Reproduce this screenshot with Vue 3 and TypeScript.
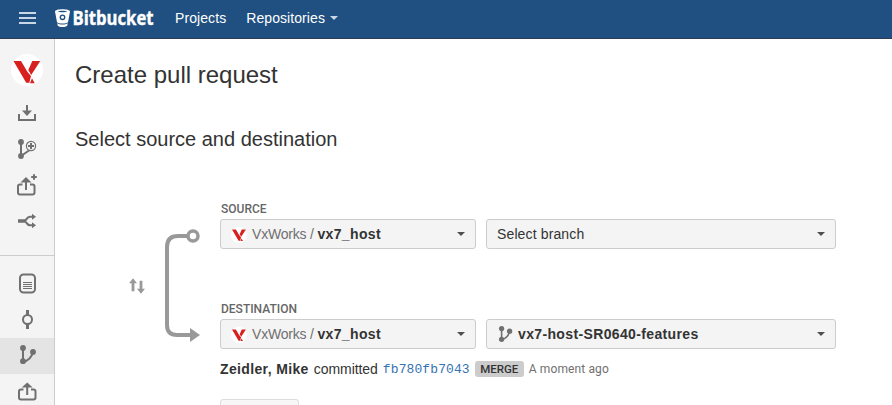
<script setup lang="ts">
interface NavItem {
  name: string
  active?: boolean
}

const actions: NavItem[] = [
  { name: 'clone' },
  { name: 'branch-add' },
  { name: 'pull-add' },
  { name: 'fork' },
]
const sections: NavItem[] = [
  { name: 'source' },
  { name: 'commits' },
  { name: 'branches', active: true },
  { name: 'pulls' },
]
const groups = [actions, sections]
const logoPath = 'M2.500 7H10L16.500 18 20 22 18.300 28.700H15.200ZM21.300 7H29.300L20.200 21 17.300 16ZM21 24.300 23.700 29.300H19Z'
</script>

<template>
  <div class="page">
    <header class="header">
      <svg class="menu" width="17" height="14" viewBox="0 0 17 14"><path d="M0 1h17M0 6h17M0 11h17" /></svg>
      <svg class="brand" width="102" height="28" viewBox="0 -3 102 28">
        <path class="white" fill-rule="evenodd" d="M0 3.600C0 .4 15 .4 15 3.600L13 14.200C11.500 16 3.500 16 2 14.200ZM2.600 3.500C4.500 4.500 10.500 4.500 12.400 3.500C10.500 2.500 4.500 2.500 2.600 3.500ZM7.500 6.400A2.900 2.900 0 1 0 7.500 12.200A2.900 2.900 0 1 0 7.500 6.400Z" />
        <circle class="white" cx="7.500" cy="9.300" r="1.500" />
        <path class="white" d="M2.200 15.300C4.500 17 10.500 17 12.800 15.300L12.200 17.700C10.500 19.400 4.500 19.400 2.800 17.700Z" />
        <text x="17.500" y="17.300" textLength="81" lengthAdjust="spacingAndGlyphs">Bitbucket</text>
      </svg>
      <nav class="links">
        <a>Projects</a>
        <a>Repositories <i class="caret light" /></a>
      </nav>
    </header>

    <div class="body">
      <aside class="sidebar">
        <div class="avatar">
          <svg width="32" height="32" viewBox="0 0 32 32"><path class="red" :d="logoPath" /></svg>
        </div>
        <div v-for="(group, g) in groups" :key="g" class="group">
          <div v-for="item in group" :key="item.name" class="item" :class="{ active: item.active }">
            <svg width="22" height="22" viewBox="0 0 22 22" class="icon">
              <template v-if="item.name === 'clone'">
                <path d="M2 12v6h16v-6M10 3v7" /><path class="fill" d="M5 8.500h10l-5 5.500Z" />
              </template>
              <template v-else-if="item.name === 'branch-add'">
                <path d="M4 4v14M4 18 12 12.500" /><circle class="fill" cx="4" cy="4" r="2.900" /><circle class="fill" cx="4" cy="18" r="2.900" />
                <circle class="thin" cx="14" cy="8" r="4.600" /><path d="M11 8h6M14 5v6" />
              </template>
              <template v-else-if="item.name === 'pull-add'">
                <path d="M5.500 10.500H3Q1 10.500 1 12.500v6q0 2 2 2h12.500q2 0 2-2v-6q0-2-2-2H13M9 7v9" /><path class="fill" d="M3.500 8.500h11l-5.500-5.500Z" /><path d="M14.200 3h5.600M17 .2v5.600" />
              </template>
              <template v-else-if="item.name === 'fork'">
                <path d="M7 11C10 11 9 6.800 13 6.800h3M7 11C10 11 9 15.200 13 15.200h3" /><path class="fill" d="M1 9.200h7v3.600H1ZM15 3.800 19 6.800 15 9.800ZM15 12.200 19 15.200 15 18.200Z" />
              </template>
              <template v-else-if="item.name === 'source'">
                <rect x="3" y="1.500" width="15" height="18" rx="3.500" /><path class="lines" d="M6 9.500h9M6 11.500h9M6 13.500h9M6 15.500h9" />
              </template>
              <template v-else-if="item.name === 'commits'">
                <circle cx="10.500" cy="10.500" r="4.500" /><path class="wide" d="M10.500 1v5M10.500 15v5" />
              </template>
              <template v-else-if="item.name === 'branches'">
                <path d="M6 3v14M6 17Q14 15 16 7" /><circle class="fill" cx="6" cy="3" r="2.900" /><circle class="fill" cx="6" cy="16.200" r="2.900" /><circle class="fill" cx="16" cy="7" r="2.900" />
              </template>
              <template v-else>
                <path d="M6.500 8.500H4Q2 8.500 2 10.500v6q0 2 2 2h12.500q2 0 2-2v-6q0-2-2-2H14M10.200 5v9" /><path class="fill" d="M4.700 6.500h11l-5.500-5Z" />
              </template>
            </svg>
          </div>
        </div>
      </aside>

      <main class="content">
        <h1><span>Create pull request</span></h1>
        <h2><span>Select source and destination</span></h2>
        <div class="compare">
          <div class="swap"><svg width="16" height="16" viewBox="0 0 16 16"><path class="grayfill" d="M0 5.200 4 .3 8 5.200H5.400V13.200H2.600V5.200ZM8 10.800h2.600V2.700h2.800v8.100H16L12 15.700Z" /></svg></div>
          <svg class="flow" width="40" height="116" viewBox="0 0 40 116"><path class="track" d="M25 9H16Q5 9 5 20v78q0 10 10 10h13" /><circle cx="31" cy="9" r="5" /><path class="grayfill" d="M28 101 38 108 28 115Z" /></svg>
          <div class="fields">
            <section class="field">
              <label><span>SOURCE</span></label>
              <div class="row">
                <button class="select repo">
                  <span class="mini"><svg width="16" height="16" viewBox="3 4 26 27"><path class="red" :d="logoPath" /></svg></span>
                  <span class="project">VxWorks / </span><b class="name">vx7_host</b><i class="caret" />
                </button>
                <button class="select branch"><span class="choose">Select branch</span><i class="caret" /></button>
              </div>
            </section>
            <section class="field">
              <label><span>DESTINATION</span></label>
              <div class="row">
                <button class="select repo">
                  <span class="mini"><svg width="16" height="16" viewBox="3 4 26 27"><path class="red" :d="logoPath" /></svg></span>
                  <span class="project">VxWorks / </span><b class="name">vx7_host</b><i class="caret" />
                </button>
                <button class="select branch">
                  <svg class="bicon icon" width="14" height="16" viewBox="3 0 17 20"><path d="M6 3v14M6 17Q14 15 16 7" /><circle class="fill" cx="6" cy="3.200" r="3.300" /><circle class="fill" cx="6" cy="16.700" r="3.300" /><circle class="fill" cx="16" cy="6.500" r="3.300" /></svg>
                  <b class="name">vx7-host-SR0640-features</b><i class="caret" />
                </button>
              </div>
            </section>
            <div class="commit">
              <b class="name">Zeidler, Mike</b><span class="verb">committed</span><code>fb780fb7043</code><span class="badge">MERGE</span><time>A moment ago</time>
            </div>
            <div class="continue" />
          </div>
        </div>
      </main>
    </div>
  </div>
</template>

<style>
body { overflow: hidden; }
</style>
<style scoped>
.page { width: 892px; height: 405px; overflow: hidden; background: #fff; color: #333; font: 14px/20px "Liberation Sans", Arial, sans-serif; display: flex; flex-direction: column; }
.page * { box-sizing: border-box; }
svg { display: block; flex: none; }
.header { height: 39px; flex: none; background: #205081; border-bottom: 1px solid #2e3d54; display: flex; padding-left: 19px; align-items: flex-start; color: #fff; }
.menu { margin-top: 12px; stroke: #c9d8e7; stroke-width: 2; }
.brand { margin: 5px 0 0 19px; fill: #fff; font: bold 19px "Open Sans", sans-serif; overflow: visible; }
.brand text { stroke: #fff; stroke-width: .4; }
.links { display: flex; margin: 8px 0 0 18px; gap: 20px; }
.links a { display: flex; align-items: center; letter-spacing: .08px; }
.caret { width: 0; height: 0; border: 4px solid transparent; border-top-color: #505050; border-bottom: 0; margin-left: auto; }
.caret.light { border-top-color: #c9d8e7; margin-left: 5px; }
.body { display: flex; flex: 1; min-height: 0; }
.sidebar { width: 55px; flex: none; background: #f4f4f4; border-right: 1px solid #ccc; padding-top: 15px; overflow: hidden; }
.avatar { width: 32px; height: 32px; margin: 0 0 9px 11px; border-radius: 50%; background: #fff; }
.red { fill: #d8201f; }
.group + .group { margin-top: 16px; border-top: 1px solid #ccc; padding-top: 10px; }
.item { height: 36px; padding: 7px 0 0 17px; }
.item.active { background: #e4e4e4; }
.icon { fill: none; stroke: #707070; stroke-width: 2; overflow: visible; }
.fill { fill: #707070; stroke: none; }
.thin { stroke-width: 1.200; }
.lines { stroke-width: 1; }
.wide { stroke-width: 3; }
.content { padding: 22px 0 0 20px; flex: 1; }
h1, h2 { margin: 0; font-weight: 400; }
h1 { font-size: 24px; line-height: 28px; }
h2 { font-size: 20px; line-height: 24px; margin-top: 38px; }
.compare { display: flex; margin-top: 50px; }
.swap { width: 16px; margin: 77px 0 0 54px; }
.grayfill { fill: #999; stroke: none; }
.flow { margin: 26px 0 0 17px; fill: none; stroke: #999; stroke-width: 4; }
.flow circle { stroke-width: 3.500; }
.fields { margin-left: 18px; }
.field { height: 100px; }
label { display: block; height: 18px; padding-left: 1px; font: 500 12px/16px Roboto, sans-serif; color: #666; }
.row { display: flex; gap: 10px; }
.select { height: 30px; display: flex; align-items: center; background: #f4f4f4; border: 1px solid #ccc; border-radius: 3px; padding: 0 10px; font: 14px/20px "Liberation Sans", Arial, sans-serif; color: #333; text-align: left; }
.repo { width: 256px; }
.branch { width: 350px; }
.mini { width: 16px; height: 16px; border-radius: 50%; background: #fff; display: flex; align-items: center; justify-content: center; margin-right: 5px; margin-top: 1px; }
.mini svg { width: 14px; height: 14px; }
.project { color: #707070; white-space: pre; letter-spacing: -.2px; }
.name { letter-spacing: .36px; }
.choose { letter-spacing: .13px; }
.bicon { margin: 0 5px 0 2px; }
.commit { display: flex; align-items: center; height: 20px; margin-top: -42px; white-space: pre; }
.verb { margin-left: 5px; letter-spacing: -.05px; }
code { margin: 2px 0 0 5px; font: 13px/20px "Liberation Mono", monospace; letter-spacing: .1px; color: #3572b0; }
.badge { margin-left: 5px; width: 49px; height: 16px; border-radius: 3px; background: #ccc; font: 500 11.500px/16px Roboto, sans-serif; text-align: center; }
time { margin-left: 5px; font: 12px/16px Roboto, sans-serif; letter-spacing: .12px; color: #707070; }
.continue { width: 79px; height: 30px; margin-top: 20px; border: 1px solid #ddd; border-radius: 3px; background: #f7f7f7; }
</style>
